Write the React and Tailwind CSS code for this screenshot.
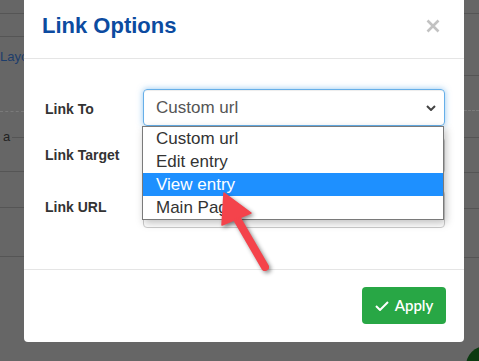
import React from "react";

function Line({ dashed, className = "" }) {
  return (
    <div
      className={`border-t ${dashed ? "border-dashed border-[#7a7a7a]" : "border-[#555]"} ${className}`}
    />
  );
}

export default function App() {
  const items = ["Custom url", "Edit entry", "View entry", "Main Page"];
  return (
    <div
      className="relative w-[479px] h-[361px] overflow-hidden bg-[#666666]"
      style={{ fontFamily: '"Liberation Sans", Arial, sans-serif' }}
    >
      {/* background page (dimmed) */}
      <div className="flex justify-between h-full">
        <div className="w-[24px] flex flex-col">
          <Line className="mt-[13px]" />
          <Line className="mt-[22px]" />
          <div className="mt-[12px] text-[13px] leading-[16px] text-[#1d3d6b] whitespace-nowrap">
            Layout
          </div>
          <Line dashed className="mt-[46px]" />
          <div className="mt-[17px] flex items-center h-[16px]">
            <span className="ml-[3px] text-[13px] leading-[16px] text-[#222]">a</span>
            <div className="flex-1 ml-[2px] border-t border-[#555]" />
          </div>
          <Line className="mt-[26px]" />
          <Line className="mt-[35px]" />
          <Line className="mt-[48px]" />
        </div>
        <div className="w-[15px] flex flex-col">
          <Line className="mt-[13px]" />
          <Line className="mt-[61px]" />
          <Line dashed className="mt-[34px]" />
          <Line className="mt-[26px]" />
          <Line className="mt-[34px]" />
          <Line className="mt-[35px]" />
          <Line className="mt-[48px]" />
        </div>
      </div>
      <div className="absolute left-[466px] top-[346px] w-[40px] h-[40px] rounded-full bg-[#0b3a10]" />

      {/* modal */}
      <div className="absolute left-[24px] top-0 w-[440px] h-[342px] bg-white rounded-b-[4px] flex flex-col">
        <div className="h-[59px] border-b border-[#e5e5e5] flex items-start justify-between pl-[18px] pr-[24px]">
          <h4 className="mt-[13px] text-[22px] leading-[26px] font-bold text-[#0c4ba0]">
            Link Options
          </h4>
          <svg width="14" height="14" viewBox="0 0 14 14" className="mt-[19px]">
            <path d="M1.5 1.5 L12.5 12.5 M12.5 1.5 L1.5 12.5" stroke="#c2c2c2" strokeWidth="2.6" strokeLinecap="butt" />
          </svg>
        </div>

        <div className="relative h-[210px] pl-[21px] pr-[19px] pt-[30px]">
          <div className="flex items-start">
            <label className="w-[98px] mt-[10px] text-[14px] leading-[20px] font-bold text-[#333]">Link To</label>
            <div className="flex-1 h-[37px] rounded-[4px] border border-[#66afe9] shadow-[inset_0_1px_1px_rgba(0,0,0,0.075),0_0_6px_rgba(102,175,233,0.7)] flex items-center justify-between pl-[12px] pr-[8px]">
              <span className="text-[17px] text-[#555]">Custom url</span>
              <svg width="10" height="6" viewBox="0 0 10 6">
                <path d="M1 1 L5 5 L9 1" fill="none" stroke="#444" strokeWidth="2" />
              </svg>
            </div>
          </div>
          <div className="flex items-start mt-[11px]">
            <label className="w-[98px] mt-[8px] text-[14px] leading-[20px] font-bold text-[#333]">Link Target</label>
            <div className="flex-1 h-[37px] rounded-[4px] border border-[#ccc]" />
          </div>
          <div className="flex items-start mt-[16px]">
            <label className="w-[98px] mt-[7px] text-[14px] leading-[20px] font-bold text-[#333]">Link URL</label>
            <div className="flex-1 h-[38px] rounded-[4px] border border-[#ccc]" />
          </div>

          {/* open dropdown */}
          <div className="absolute left-[118px] top-[67px] w-[302px] bg-white border border-[#7a7a7a] shadow-[2px_3px_8px_rgba(0,0,0,0.25)]">
            {items.map((t, i) => (
              <div
                key={t}
                className={`h-[23px] pl-[13px] text-[17px] leading-[23px] whitespace-nowrap ${
                  i === 2 ? "bg-[#1e90ff] text-white" : "text-[#333]"
                }`}
              >
                {t}
              </div>
            ))}
          </div>
        </div>

        <div className="flex-1 border-t border-[#e5e5e5] flex items-start justify-end pt-[17px] pr-[18px]">
          <button
            className="w-[84px] h-[37px] rounded-[4px] bg-[#28a745] text-white flex items-center justify-center gap-[6px] text-[15px] font-semibold"
            style={{ fontFamily: "Lato, sans-serif" }}
          >
            <svg width="14" height="10" viewBox="0 0 14 10">
              <path d="M1 5 L5 9 L13 1" fill="none" stroke="white" strokeWidth="2" />
            </svg>
            Apply
          </button>
        </div>
      </div>

      {/* annotation arrow */}
      <svg
        className="absolute left-0 top-0 pointer-events-none"
        width="479"
        height="361"
        style={{ filter: "drop-shadow(2px 2px 2px rgba(0,0,0,0.45))" }}
      >
        <line x1="236" y1="217" x2="265" y2="267" stroke="#f4434b" strokeWidth="8" strokeLinecap="round" />
        <polygon points="224,193 222,225 251,213" fill="#f4434b" stroke="#f4434b" strokeWidth="1.5" strokeLinejoin="round" />
      </svg>
    </div>
  );
}
